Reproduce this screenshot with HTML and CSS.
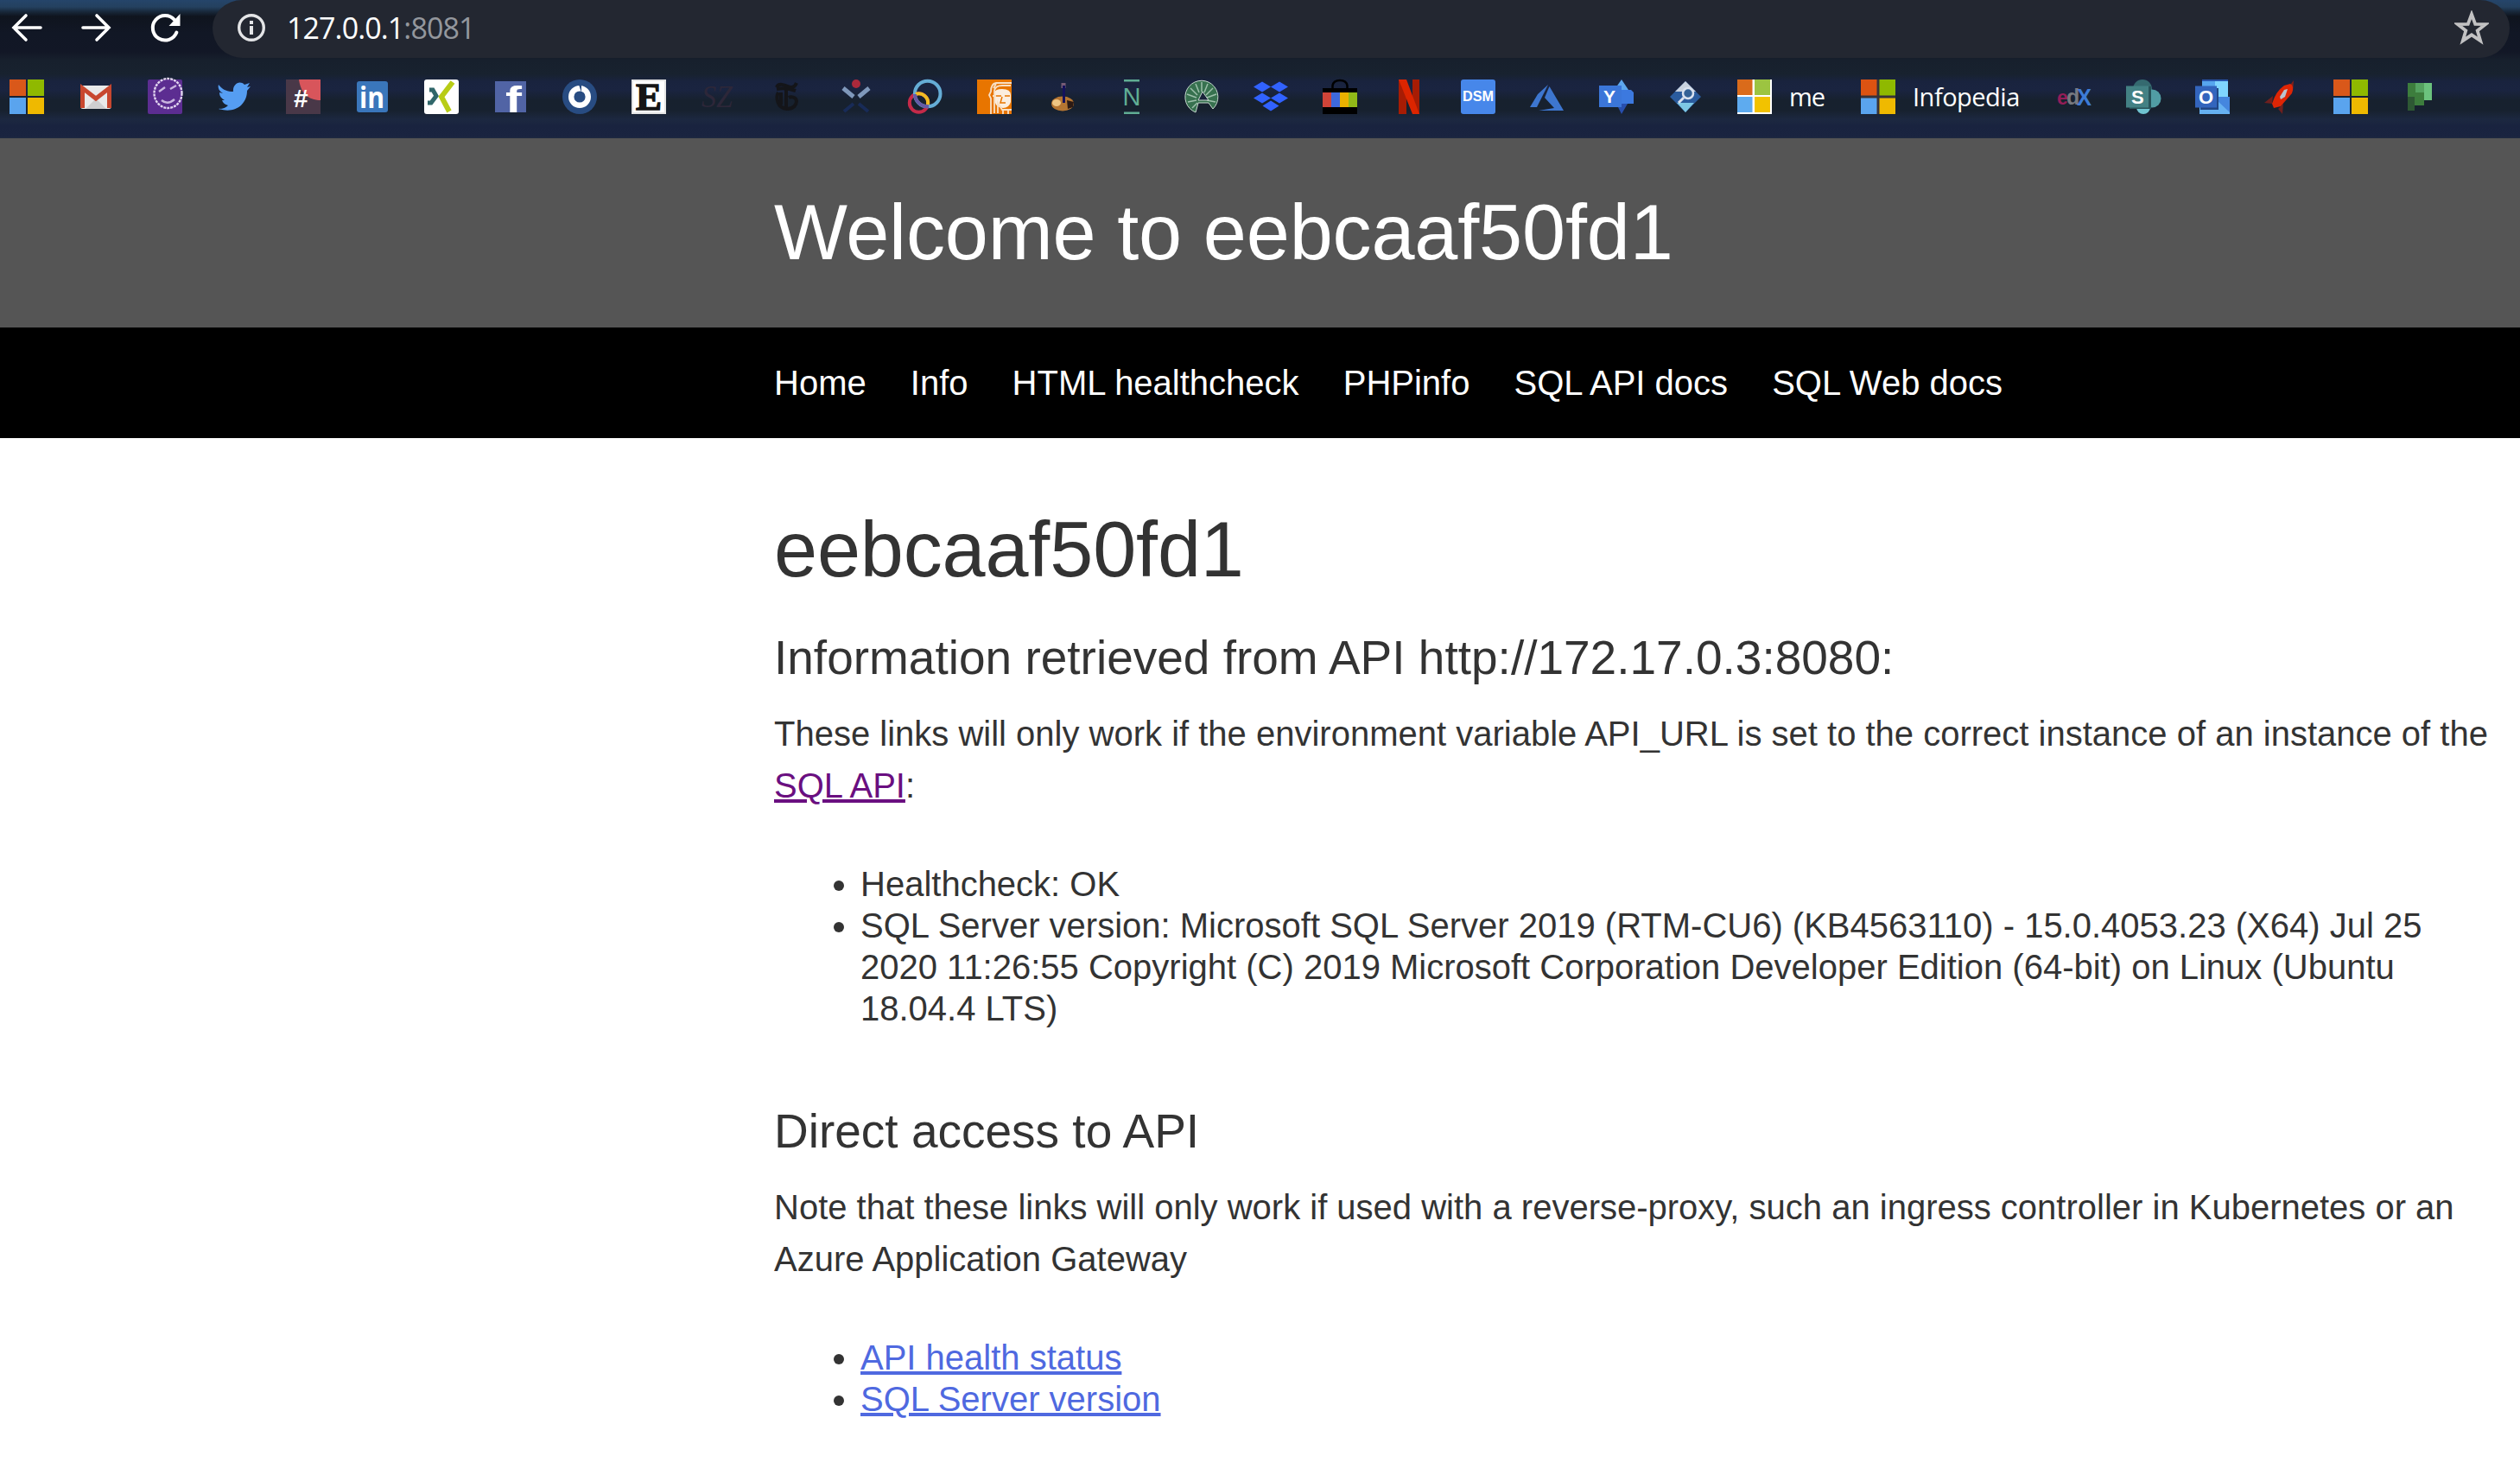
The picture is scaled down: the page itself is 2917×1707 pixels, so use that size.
FILE: index.html
```html
<!DOCTYPE html>
<html lang="en">
<head>
<meta charset="utf-8">
<title>Welcome to eebcaaf50fd1</title>
<link rel="stylesheet" href="styles.css">
</head>
<body>
<div class="browser">
  <div class="toolbar">
    <svg class="tool" viewBox="0 0 40 40"><path d="M37 20H6M20 6L6 20l14 14" fill="none" stroke="#fff" stroke-width="3.6" stroke-linecap="round"/></svg>
    <svg class="tool" viewBox="0 0 40 40"><path d="M6 20h30M22 6l14 14-14 14" fill="none" stroke="#fff" stroke-width="3.6" stroke-linecap="round"/></svg>
    <svg class="tool" viewBox="0 0 40 40"><path d="M34.4 25.5A14.3 14.3 0 1 1 32 11" fill="none" stroke="#fff" stroke-width="4" stroke-linecap="round"/><path d="M38.500 4v14H25.500z" fill="#fff"/></svg>
    <div class="omnibox">
      <svg class="info" viewBox="0 0 32 32"><circle cx="16" cy="16" r="14.300" fill="none" stroke="#e4e5e7" stroke-width="3.400"/><path d="M14 14h4v10h-4zM14 8h4v4h-4z" fill="#e4e5e7"/></svg>
      <span class="url">127.0.0.1<span class="port">:8081</span></span>
      <svg class="star" viewBox="0 0 40 40"><path d="M20 4.500l4.200 11.300 12 .3-9.500 7.400 3.500 11.700L20 28.400l-10.200 6.800 3.500-11.700L3.800 16.100l12-.3z" fill="none" stroke="#c2c2c3" stroke-width="3.800"/></svg>
    </div>
  </div>
  <div class="bookmarks">
    <svg class="fav" viewBox="0 0 40 40"><path d="M0 0h19v19H0z" fill="#d9581a"/><path d="M21 0h19v19H21z" fill="#8fb900"/><path d="M0 21h19v19H0z" fill="#5aa4ee"/><path d="M21 21h19v19H21z" fill="#efb900"/></svg>
    <svg class="fav" viewBox="0 0 40 40"><rect x="2" y="7" width="36" height="27" rx="3" fill="#e9e9ea"/><path d="M8 34l12-12 12 12z" fill="#cfcfd1"/><path d="M4.500 33V10L20 22 35.500 10v23" fill="none" stroke="#c8472f" stroke-width="5"/></svg>
    <svg class="fav" viewBox="0 0 40 40"><rect width="40" height="40" rx="2" fill="#5c2d91"/><ellipse cx="23.500" cy="16" rx="16" ry="17" fill="none" stroke="#e2d5f0" stroke-width="2.400" stroke-dasharray="3 1"/><path d="M13 14l7-5M26 11l7-4M16 24q7 6 15-1" fill="none" stroke="#c9b5df" stroke-width="2.400"/></svg>
    <svg class="fav" viewBox="0 0 40 40"><path d="M2 6c5 6 10 8 17 8C18 6 26 0 32 6l6-2-3 5 4-1-4 5c0 16-14 27-33 21 5 0 8-1 11-4-4-1-6-3-7-6h3C5 22 3 19 3 15l4 1C2 13 1 9 2 6z" fill="#559df2"/></svg>
    <svg class="fav" viewBox="0 0 40 40"><path d="M0 0h40v40H0z" fill="#493848"/><path d="M15 0h25v24C25 24 17 15 15 0z" fill="#d8555b"/><text x="9" y="32" class="sans bold" font-size="30" fill="#fff">#</text></svg>
    <svg class="fav" viewBox="0 0 40 40"><rect x="2" y="2" width="36" height="36" rx="3" fill="#3a76bb"/><text x="5" y="33" class="opensans bold" font-size="34" textLength="29" lengthAdjust="spacingAndGlyphs" fill="#fff">in</text></svg>
    <svg class="fav" viewBox="0 0 40 40"><rect width="40" height="40" rx="3" fill="#fff"/><path d="M6 12h4l4 7-6 8H4" fill="none" stroke="#30676a" stroke-width="5"/><path d="M33 3L20 20l9 17" fill="none" stroke="#b8cc16" stroke-width="6"/></svg>
    <svg class="fav" viewBox="0 0 40 40"><rect x="2" y="2" width="36" height="36" fill="#5164a5"/><text x="14" y="38" class="sans bold" font-size="42" textLength="19" lengthAdjust="spacingAndGlyphs" fill="#fff">f</text></svg>
    <svg class="fav" viewBox="0 0 40 40"><circle cx="20" cy="20" r="20" fill="#284c82"/><circle cx="20" cy="20" r="9.800" fill="none" stroke="#fff" stroke-width="6.400"/><path d="M19 6l3 0 0 9z" fill="#284c82"/></svg>
    <svg class="fav" viewBox="0 0 40 40"><path d="M1 1h38v38H1z" fill="#fff" stroke="#e5e5e5" stroke-width="2"/><text x="5" y="34.500" class="serif bold" font-size="44" textLength="30" lengthAdjust="spacingAndGlyphs" fill="#151515" stroke="#151515" stroke-width="1.500">E</text></svg>
    <svg class="fav" viewBox="0 0 40 40"><text x="1" y="32" class="serif italic" font-size="36" textLength="36" lengthAdjust="spacingAndGlyphs" fill="#2d2739">SZ</text></svg>
    <svg class="fav" viewBox="0 0 40 40"><path d="M8 9c2-5 9-3 13-1s8 1 10-4M10 15c-3 5-2 18 10 19 8 0 11-5 11-9s-6-6-9-4M8 11q11-2 22 2M19 11v22M13 15v14" fill="none" stroke="#141519" stroke-width="4"/></svg>
    <svg class="fav" viewBox="0 0 40 40"><circle cx="20" cy="5" r="5" fill="#ac293b"/><path d="M5 10l12 10M35 10L23 20" stroke="#7f98bb" stroke-width="5"/><path d="M17 28L6 37M23 28l11 9" stroke="#182b57" stroke-width="4"/></svg>
    <svg class="fav" viewBox="0 0 40 40"><circle cx="12.500" cy="27" r="10.700" fill="none" stroke="#c52a49" stroke-width="4"/><circle cx="22.700" cy="16.500" r="14.800" fill="none" stroke="#65add6" stroke-width="4"/><path d="M9 16.900A10.700 10.700 0 0 1 23 29" fill="none" stroke="#f1bd23" stroke-width="4"/><path d="M8 17A14.800 14.800 0 0 0 24 31.200" fill="none" stroke="#665aa5" stroke-width="4"/></svg>
    <svg class="fav" viewBox="0 0 40 40"><path d="M0 0h40v40H0z" fill="#e87500"/><path d="M20 15q1-4 9-4 10 0 10 7v8q-2 7-9 7-8-1-9-6z" fill="#fbeee0"/><path d="M40 4H22q-6 1-6 10l-2 4 2 4v18M20 39V13q1-6 9-6h10M24 39V27l5 8h11M18 19h4M22 5l-3 5M30 36v4M36 34v6" fill="none" stroke="#f8dfc5" stroke-width="1.800"/><path d="M22 19h6M32 19h6M29 20l-2 7h6" fill="none" stroke="#e87500" stroke-width="1.500"/></svg>
    <svg class="fav" viewBox="0 0 40 40"><ellipse cx="19" cy="28" rx="13" ry="8.500" fill="#b57532"/><ellipse cx="12" cy="27" rx="5" ry="4" fill="#efc583"/><path d="M24 24l8 2-1 6-6 2z" fill="#2c1a14"/><path d="M20 4v6" stroke="#765b76" stroke-width="5"/><path d="M20.500 7v20" stroke="#14115c" stroke-width="3"/></svg>
    <svg class="fav" viewBox="0 0 40 40"><path d="M10 1.300h18M10 38.700h18" stroke="#60ad94" stroke-width="2.600"/><text x="8.500" y="30" class="sans" font-size="29" textLength="21" lengthAdjust="spacingAndGlyphs" fill="#60ad94">N</text></svg>
    <svg class="fav" viewBox="0 0 40 40"><path d="M13 38A19 19 0 1 1 33 34l-5-7h-12z" fill="#37714f" stroke="#c7d9cf" stroke-width="1"/><path d="M20 3v11M13 5l4 10M27 5l-4 10M7 10l8 8M33 10l-8 8M3 17l11 4M37 17l-11 4M4 26l10-2M36 26l-10-2M9 33l6-6" stroke="#9dc0ab" stroke-width="1.500"/><path d="M21 14l7 10H16z" fill="#19233a" stroke="#c7d9cf"/></svg>
    <svg class="fav" viewBox="0 0 40 40"><path d="M0 8.500L10 2.500l10 6-10 6zM20 8.500l10-6 10 6-10 6zM0 21.500l10-6 10 6-10 6zM20 21.500l10-6 10 6-10 6zM10.500 30.500l9.500-6 9.500 6-9.500 6z" fill="#3162ff"/></svg>
    <svg class="fav" viewBox="0 0 40 40"><path d="M11.500 11V7q1-6 8.500-6t8.500 6v4" fill="none" stroke="#000" stroke-width="2.500"/><path d="M0 10h40v30H0z"/><path d="M0 15h10v17H0z" fill="#d04438"/><path d="M10 15h10v17H10z" fill="#3e69dc"/><path d="M20 15h10v17H20z" fill="#e9b100"/><path d="M30 15h10v17H30z" fill="#91b918"/></svg>
    <svg class="fav" viewBox="0 0 40 40"><path d="M8 0h9v40H8zM24 0h8v40h-8z" fill="#a71c04"/><path d="M8 0h9l15 40h-8z" fill="#dc2500"/></svg>
    <svg class="fav" viewBox="0 0 40 40"><rect width="40" height="40" rx="3" fill="#4787ea"/><text x="2" y="25" class="sans bold" font-size="17" textLength="36" lengthAdjust="spacingAndGlyphs" fill="#fff">DSM</text></svg>
    <svg class="fav" viewBox="0 0 40 40"><path d="M0 32L9 17 21 6 8 32zM22.500 8L39 36H10l18-3-11-12z" fill="#3d76cf"/></svg>
    <svg class="fav" viewBox="0 0 40 40"><path d="M26 0l8 12-8 8-7-10z" fill="#5da7ee"/><path d="M26 40l7-12-8-8-3 12z" fill="#284fae"/><path d="M24 12h13l3 3v13H24z" fill="#3c79df"/><rect y="7" width="26" height="25" fill="#3b76d9"/><text x="5" y="27" class="sans bold" font-size="21" fill="#fff">Y</text></svg>
    <svg class="fav" viewBox="0 0 40 40"><path d="M20 2l18 18-18 18L2 20z" fill="#2b5c9e"/><path d="M20 2l12 12H8z" fill="#c9d2df"/><path d="M10 27h20L20 38z" fill="#7ec8e5"/><circle cx="23" cy="16" r="6" fill="#356296" stroke="#dae2ef" stroke-width="2.500"/><path d="M18 21l-6 6" stroke="#dae2ef" stroke-width="3"/></svg>
    <a class="bookmark"><svg class="fav" viewBox="0 0 40 40"><path d="M0 0h40v40H0z" fill="#fff"/><path d="M0 0h17.500v18H0z" fill="#da6b1b"/><path d="M20 0h18v18H20z" fill="#9cc441"/><path d="M0 20h17.500v18H0z" fill="#5eabef"/><path d="M20 20h18v18H20z" fill="#f2c200"/></svg><span class="label label-me">me</span></a>
    <a class="bookmark"><svg class="fav" viewBox="0 0 40 40"><path d="M0 0h40v40H0z" fill="#383238"/><path d="M0 0h18.500v18.500H0z" fill="#dc5312"/><path d="M21.500 0H40v18.500H21.500z" fill="#8fb900"/><path d="M0 21.500h18.500V40H0z" fill="#5aa4ee"/><path d="M21.500 21.500H40V40H21.500z" fill="#efb900"/></svg><span class="label label-info">Infopedia</span></a>
    <svg class="fav" viewBox="0 0 40 40"><g class="sans bold"><text x="0" y="29" font-size="23" fill="#941d58">e</text><text x="11" y="29" font-size="25" fill="#777980">d</text><text x="23" y="30" font-size="28" textLength="17" lengthAdjust="spacingAndGlyphs" fill="#3d7cd6">X</text></g></svg>
    <svg class="fav" viewBox="0 0 40 40"><circle cx="19" cy="11" r="11" fill="#356a70"/><circle cx="30" cy="22" r="10.500" fill="#519da4"/><circle cx="20" cy="32" r="8" fill="#70c4d0"/><path d="M4 8h25v26H4z" fill="#275359"/><rect y="7.500" width="26" height="25" fill="#438184"/><text x="6" y="28" class="sans bold" font-size="22" fill="#fff">S</text></svg>
    <svg class="fav" viewBox="0 0 40 40"><path d="M8 0h30v20H8z" fill="#2856ad"/><path d="M8 2h15v18H8z" fill="#57a6ef"/><path d="M23 2h15v18H23z" fill="#7fd5ff"/><path d="M5 20h35v20H5z" fill="#4586de"/><path d="M25 24l15 14v2H5v-8z" fill="#66b1f1"/><path d="M6 10h21v25H6z" fill="#214785"/><rect y="7.500" width="25" height="25" fill="#3365bd"/><text x="4" y="28" class="sans bold" font-size="22" fill="#fff">O</text></svg>
    <svg class="fav" viewBox="0 0 40 40"><path d="M10 19L0 27l9 1M22 28l-1 12-5-6" fill="#6f201e"/><path d="M34 1l-6 8 5 5z" fill="#842019"/><path d="M30 5q5 2 2 11L19 31l-8 2-2-5q4-14 14-21z" fill="#df2505"/><path d="M18 20l5-8 4-1-3 9-5 3z" fill="#bac3cf"/></svg>
    <svg class="fav" viewBox="0 0 40 40"><path d="M0 0h19v19H0z" fill="#d9581a"/><path d="M21 0h19v19H21z" fill="#8fb900"/><path d="M0 21h19v19H0z" fill="#5aa4ee"/><path d="M21 21h19v19H21z" fill="#efb900"/></svg>
    <svg class="fav" viewBox="0 0 40 40"><path d="M6 4h9v16H6z" fill="#3d7d3d"/><path d="M15 4h10v11H15z" fill="#55a260"/><path d="M25 4h9v20H25z" fill="#6bc27d"/><path d="M6 15h19v15H6z" fill="#3d7d3d"/><path d="M6 20h8v16H6z" fill="#2e5834"/></svg>
  </div>
</div>
<header class="banner"><h1>Welcome to eebcaaf50fd1</h1></header>
<nav class="menu">
  <a>Home</a><a>Info</a><a>HTML healthcheck</a><a>PHPinfo</a><a>SQL API docs</a><a>SQL Web docs</a>
</nav>
<main class="content">
  <h1>eebcaaf50fd1</h1>
  <h2>Information retrieved from API http://172.17.0.3:8080:</h2>
  <p>These links will only work if the environment variable API_URL is set to the correct instance of an instance of the <a class="link visited">SQL API</a>:</p>
  <ul>
    <li>Healthcheck: OK</li>
    <li>SQL Server version: Microsoft SQL Server 2019 (RTM-CU6) (KB4563110) - 15.0.4053.23 (X64) Jul 25 2020 11:26:55 Copyright (C) 2019 Microsoft Corporation Developer Edition (64-bit) on Linux (Ubuntu 18.04.4 LTS)</li>
  </ul>
  <h2>Direct access to API</h2>
  <p>Note that these links will only work if used with a reverse-proxy, such an ingress controller in Kubernetes or an Azure Application Gateway</p>
  <ul>
    <li><a class="link">API health status</a></li>
    <li><a class="link">SQL Server version</a></li>
  </ul>
</main>
</body>
</html>
```
FILE: styles.css
```css
* { box-sizing: border-box; }
body {
  margin: 0;
  height: 1707px;
  overflow: hidden;
  background: #fff;
  color: #333;
  font-family: "Liberation Sans", Arial, sans-serif;
  font-size: 40px;
}
h1, h2, p, ul { margin: 0; }
h1, h2 { font-weight: 400; }

.browser {
  height: 160px;
  background: linear-gradient(#25456a 0, #24415f 8px, #172638 14px, #0f141e 19px, #111725 38px, #121726 60px, #17202d 70px, #18222f 86px, #19233e 94px, #1a2440 104px, #17212e 116px, #17212f 128px, #1c2840 138px, #19233f 146px, #1a2440 158px, #202b40 160px);
}
.toolbar {
  display: flex;
  align-items: center;
  height: 67px;
  padding: 0 12px 4px 10px;
  gap: 40px;
}
.tool { flex: none; width: 40px; height: 40px; }
.omnibox {
  display: flex;
  align-items: center;
  flex: 1;
  align-self: flex-start;
  height: 67px;
  margin-left: -4px;
  padding: 0 24px 3px 29px;
  border-radius: 35px;
  border-top-left-radius: 35px 33px;
  border-top-right-radius: 35px 33px;
  background: #232731;
}
.info { width: 32px; height: 32px; }
.url {
  flex: 1;
  margin-left: 25px;
  color: #fff;
  font: 34px/40px "Open Sans", "Noto Sans", sans-serif;
  letter-spacing: -0.9px;
}
.port { color: #94979d; }
.star { width: 40px; height: 40px; }
.bookmarks {
  display: flex;
  gap: 40px;
  padding: 25px 0 0 11px;
}
.fav { flex: none; width: 40px; height: 40px; overflow: visible; }
.bookmark { display: flex; gap: 20px; }
.label {
  color: #fff;
  font: 29px/40px "Open Sans", "Noto Sans", sans-serif;
  white-space: nowrap;
}
.label-me { width: 43px; letter-spacing: -1px; }
.label-info { width: 127px; letter-spacing: -0.5px; }
.sans { font-family: "Liberation Sans", sans-serif; }
.opensans { font-family: "Open Sans", sans-serif; }
.serif { font-family: "Liberation Serif", serif; }
.bold { font-weight: 700; }
.italic { font-style: italic; }

.banner {
  height: 219px;
  padding: 55px 0 0 896px;
  background: #555;
  color: #fff;
}
h1 { font-size: 90px; line-height: 108px; letter-spacing: -0.15px; }
.menu {
  display: flex;
  gap: 51.100px;
  height: 128px;
  padding-left: 896px;
  background: #000;
  color: #fff;
  line-height: 128px;
}
.content { padding: 75px 25px 0 896px; }
h2 { margin: 38px 0 25px; font-size: 55px; line-height: 66px; }
p { line-height: 60px; }
ul { margin: 60px 0 85px; padding-left: 100px; line-height: 48px; }
.link { color: #4f69e0; text-decoration: underline; }
.visited { color: #6a0f80; }
```
